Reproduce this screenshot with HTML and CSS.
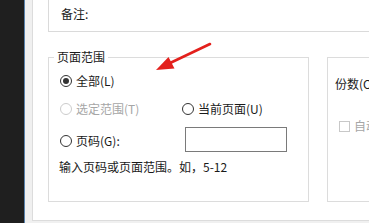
FILE: index.html
```html
<!DOCTYPE html>
<html lang="zh">
<head>
<meta charset="utf-8">
<link rel="stylesheet" href="styles.css">
</head>
<body>
<div class="screen">
  <div class="sidebar"></div>
  <div class="frame">
    <div class="panel">
      <div class="notes"><span>备注:</span></div>
      <div class="groups">
        <fieldset class="group range">
          <legend>页面范围</legend>
          <div class="row r1">
            <label class="radio checked"><span class="dot"></span>全部(L)</label>
          </div>
          <div class="row r2">
            <label class="radio disabled col1"><span class="dot"></span>选定范围(T)</label>
            <label class="radio"><span class="dot"></span>当前页面(U)</label>
          </div>
          <div class="row r3">
            <label class="radio col1"><span class="dot"></span>页码(G):</label>
            <span class="textbox"></span>
          </div>
          <p class="hint">输入页码或页面范围。如，5-12</p>
        </fieldset>
        <fieldset class="group copies">
          <div class="copies-label">份数(C):</div>
          <label class="check disabled"><span class="box"></span>自动分页(T)</label>
        </fieldset>
      </div>
    </div>
  </div>
  <svg class="arrow" width="369" height="223" viewBox="0 0 369 223">
    <line x1="210" y1="44" x2="168" y2="64" stroke="#e3201c" stroke-width="2.6" stroke-linecap="round"/>
    <polygon points="156,70 168.5,57 174.5,68.5" fill="#e3201c"/>
  </svg>
</div>
</body>
</html>
```
FILE: styles.css
```css
* { box-sizing: border-box; }
html, body { margin: 0; padding: 0; }
body {
  font-family: "Noto Sans CJK SC", "Noto Sans", sans-serif;
  font-size: 12px;
  line-height: 16px;
  color: #1a1a1a;
  background: #f0f0f0;
}
.screen {
  position: relative;
  display: flex;
  width: 369px;
  height: 223px;
  overflow: hidden;
}
.sidebar {
  width: 25px;
  flex: none;
  background: #1f1f1f;
  border-right: 1px solid #5a83ad;
}
.frame {
  flex: 1;
  display: flex;
  background: #f0f0f0;
  padding: 0 0 2px 7px;
  min-width: 0;
}
.panel {
  flex: 1;
  min-width: 0;
  background: #fff;
  border-left: 1px solid #dcdcdc;
  border-bottom: 1px solid #dcdcdc;
  overflow: hidden;
}
.notes {
  margin-left: 15px;
  height: 32px;
  padding: 6px 0 0 12px;
  border-left: 1px solid #dadada;
  border-bottom: 1px solid #dadada;
}
.groups {
  display: flex;
  align-items: flex-start;
  gap: 18px;
  margin: 17px 0 0 15px;
}
.group {
  margin: 0;
  padding: 0;
  min-width: 0;
  border: 1px solid #dcdcdc;
  flex: none;
}
.range {
  width: 261px;
  height: 153px;
  padding-left: 11px;
}
.range legend {
  margin-left: -6px;
  padding: 0 3px;
  line-height: 16px;
}
.copies {
  width: 120px;
  height: 145px;
  margin-top: 8px;
  padding-left: 7px;
}
.row {
  display: flex;
  align-items: center;
}
.r1 { margin-top: 8px; height: 16px; }
.r2 { margin-top: 12px; height: 16px; }
.r3 { margin-top: 10px; height: 25px; }
.col1 { width: 122px; flex: none; }
.radio {
  display: inline-flex;
  align-items: center;
  white-space: nowrap;
}
.dot {
  position: relative;
  width: 12px;
  height: 12px;
  margin-right: 4px;
  border: 1px solid #333;
  border-radius: 50%;
  background: #fff;
  flex: none;
}
.checked .dot::after {
  content: "";
  position: absolute;
  left: 2px;
  top: 2px;
  width: 6px;
  height: 6px;
  border-radius: 50%;
  background: #333;
}
.disabled { color: #a6a6a6; }
.disabled .dot { border-color: #cccccc; }
.r3 .radio { margin-top: 3px; }
.textbox {
  display: block;
  width: 102px;
  height: 25px;
  margin-left: 3px;
  border: 1px solid #7a7a7a;
  background: #fff;
}
.hint {
  margin: 7px 0 0 -1px;
  white-space: nowrap;
}
.copies-label {
  margin-top: 18px;
  white-space: nowrap;
}
.check {
  display: flex;
  align-items: center;
  margin: 26px 0 0 4px;
  white-space: nowrap;
}
.box {
  width: 11px;
  height: 11px;
  margin-right: 4px;
  border: 1px solid #c8c8c8;
  flex: none;
}
.arrow {
  position: absolute;
  left: 0;
  top: 0;
  pointer-events: none;
}
```
